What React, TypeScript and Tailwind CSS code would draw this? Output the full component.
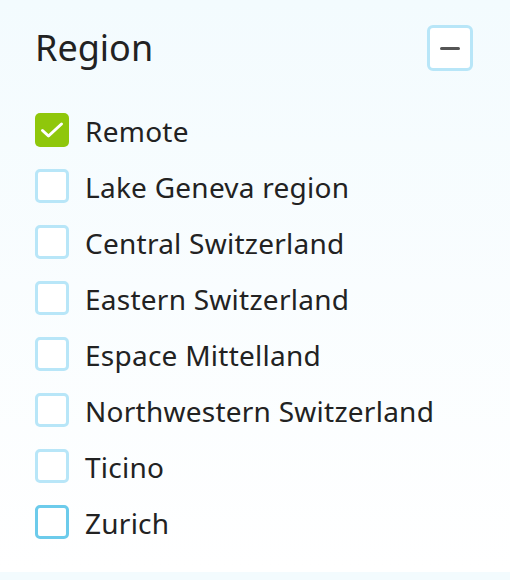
import React from 'react';

const regions = [
  { label: 'Remote', checked: true },
  { label: 'Lake Geneva region' },
  { label: 'Central Switzerland' },
  { label: 'Eastern Switzerland' },
  { label: 'Espace Mittelland' },
  { label: 'Northwestern Switzerland' },
  { label: 'Ticino' },
  { label: 'Zurich', hover: true },
];

const Box: React.FC<{ checked?: boolean; hover?: boolean }> = ({ checked, hover }) => {
  if (checked) {
    return (
      <span className="w-[34px] h-[34px] rounded-[5px] bg-[#8fc70b] flex items-center justify-center flex-shrink-0">
        <svg width="24" height="24" viewBox="0 0 24 24" fill="none" stroke="white" strokeWidth="3" strokeLinecap="round" strokeLinejoin="round">
          <path d="M2.5 12.5L8.5 18L21.5 6" />
        </svg>
      </span>
    );
  }
  return (
    <span
      className={`w-[34px] h-[34px] rounded-[5px] border-[3px] bg-white flex-shrink-0 ${
        hover ? 'border-[#6ccbeb]' : 'border-[#b8e6f8]'
      }`}
    />
  );
};

export default function App() {
  return (
    <div className="w-[510px] h-[580px] bg-[#f3fbfe]" style={{ fontFamily: '"Noto Sans", sans-serif' }}>
      <div className="h-[572px] bg-gradient-to-b from-[#f3fbfe] to-white pl-[35px] pr-[37px] pt-[25px]">
        {/* Header */}
        <div className="flex items-center justify-between">
          <h2 className="text-[36px] leading-[46px] text-[#222]">Region</h2>
          <button className="w-[46px] h-[46px] rounded-[6px] border-[3px] border-[#b8e6f8] bg-white flex items-center justify-center">
            <span className="block w-[20px] h-[3px] rounded-full bg-[#555]" />
          </button>
        </div>

        {/* Options */}
        <div className="mt-[42px] flex flex-col gap-[22px]">
          {regions.map((r) => (
            <label key={r.label} className="flex items-center gap-[16px] h-[34px] cursor-pointer">
              <Box checked={r.checked} hover={r.hover} />
              <span className="text-[28px] text-[#222] leading-none tracking-[0.25px] pt-[2px]">{r.label}</span>
            </label>
          ))}
        </div>
      </div>
    </div>
  );
}
